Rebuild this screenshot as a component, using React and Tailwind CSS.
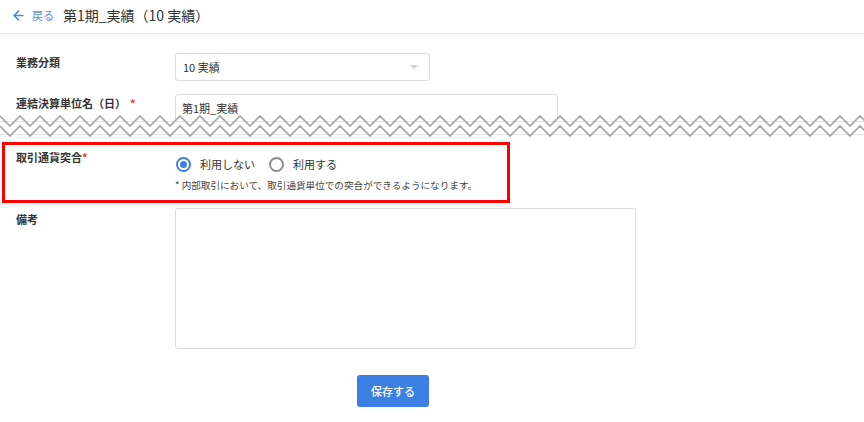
import React from "react";

const font = { fontFamily: '"Noto Sans CJK JP", "Noto Sans", sans-serif' };

function Zigzag() {
  const w = 864;
  const topPts = [];
  const botPts = [];
  for (let x = 0; x <= w + 20; x += 10) {
    const up = (x / 10) % 2 === 0;
    topPts.push(`${x},${up ? 3 : 13}`);
    botPts.push(`${x},${up ? 13 : 23}`);
  }
  const fill = `0,26 ${topPts.join(" ")} ${w + 20},26`;
  return (
    <svg width={w} height="26" className="block relative -mt-[9px]" viewBox={`0 0 ${w} 26`}>
      <polygon points={fill} fill="#ffffff" />
      <line x1="0" y1="8.5" x2={w} y2="8.5" stroke="#e2e2e2" strokeWidth="1" />
      <line x1="0" y1="21.5" x2={w} y2="21.5" stroke="#e2e2e2" strokeWidth="1" />
      <polyline points={topPts.join(" ")} fill="none" stroke="#a6a6a6" strokeWidth="1.6" />
      <polyline points={botPts.join(" ")} fill="none" stroke="#a6a6a6" strokeWidth="1.6" />
    </svg>
  );
}

function Radio({ checked }) {
  return checked ? (
    <span className="block box-border w-[15px] h-[15px] rounded-full border-2 border-[#3b7fe4] flex items-center justify-center">
      <span className="block w-[7px] h-[7px] rounded-full bg-[#3b7fe4]" />
    </span>
  ) : (
    <span className="block box-border w-[15px] h-[15px] rounded-full border-2 border-[#8c8c8c]" />
  );
}

export default function App() {
  return (
    <div className="w-[864px] h-[422px] bg-white text-[#333] overflow-hidden" style={font}>
      <div className="h-[34px] border-b border-[#e4e4e4] flex items-center pl-[11px]">
        <svg width="15" height="15" viewBox="0 0 24 24" fill="none" stroke="#4a86dc" strokeWidth="2.4" strokeLinecap="round" strokeLinejoin="round" className="-mt-[2px]">
          <path d="M12 19l-7-7 7-7" />
          <path d="M19 12H5" />
        </svg>
        <span className="ml-[6px] text-[11px] text-[#5b8edb] -mt-[2px]">戻る</span>
        <span className="ml-[9px] text-[14px] text-[#333] -mt-[2px]">第1期_実績（10 実績）</span>
      </div>

      <div className="pt-[19px]">
        <div className="flex items-start pl-[16px]">
          <div className="w-[159px] pt-[1px] text-[11px] font-bold leading-[16px]">業務分類</div>
          <div className="w-[255px] h-[28px] border border-[#dcdcdc] rounded-[3px] flex items-center justify-between pl-[7px] pr-[11px]">
            <span className="text-[11px]">10 実績</span>
            <span className="w-0 h-0 border-l-[4px] border-r-[4px] border-t-[4px] border-l-transparent border-r-transparent border-t-[#cfcfcf]" />
          </div>
        </div>

        <div className="flex items-start pl-[16px] mt-[13px]">
          <div className="w-[159px] pt-[1px] text-[11px] font-bold leading-[16px]">
            連結決算単位名（日）<span className="text-[#e53935] ml-[4px]">*</span>
          </div>
          <div className="w-[383px] h-[28px] border border-[#dcdcdc] rounded-[3px] flex items-center pl-[6px]">
            <span className="text-[11px]">第1期_実績</span>
          </div>
        </div>

        <Zigzag />

        <div className="ml-[2px] mt-[3px] w-[508px] h-[61px] border-[3px] border-[#ff0000] flex items-start pl-[11px]">
          <div className="w-[159px] pt-[4px] text-[11px] font-bold leading-[16px]">
            取引通貨突合<span className="text-[#e53935]">*</span>
          </div>
          <div className="flex flex-col pt-[10px]">
            <div className="flex items-center h-[18px]">
              <span className="ml-[1px]"><Radio checked /></span>
              <span className="ml-[9px] text-[11px]">利用しない</span>
              <span className="ml-[14px]"><Radio /></span>
              <span className="ml-[9px] text-[11px]">利用する</span>
            </div>
            <div className="mt-[4px] text-[9.6px] leading-[16px] text-[#444]">* 内部取引において、取引通貨単位での突合ができるようになります。</div>
          </div>
        </div>

        <div className="flex items-start pl-[16px] mt-[5px]">
          <div className="w-[159px] pt-[3px] text-[11px] font-bold leading-[16px]">備考</div>
          <div className="w-[461px] h-[141px] border border-[#dcdcdc] rounded-[3px]" />
        </div>

        <div className="mt-[26px] ml-[357px]">
          <button className="w-[72px] h-[32px] rounded-[3px] bg-[#3c80e4] text-white text-[11px] font-medium">保存する</button>
        </div>
      </div>
    </div>
  );
}
